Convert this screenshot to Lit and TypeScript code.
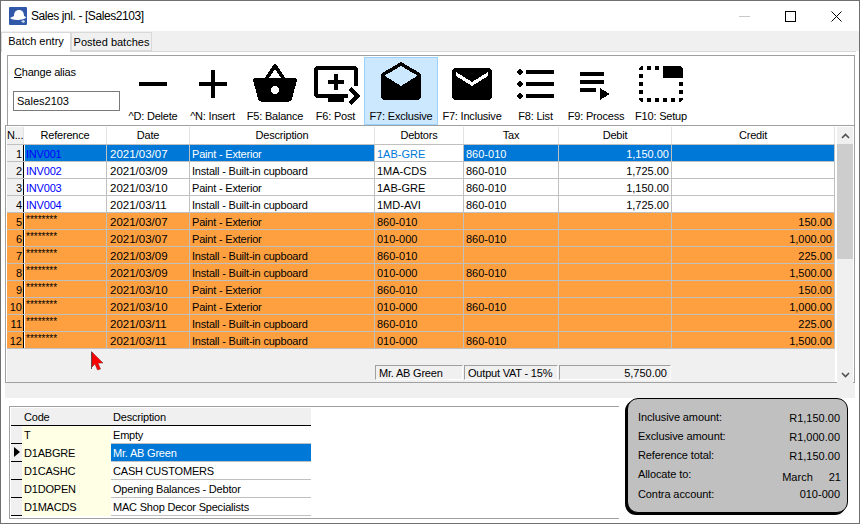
import { LitElement, css, html, svg } from "lit";
import { customElement } from "lit/decorators.js";

// 48px material glyphs used by the toolbar
const ICONS: Record<string, string> = {
  remove: "M19 13H5v-2h14v2z",
  add: "M19 13h-6v6h-2v-6H5v-2h6V5h2v6h6v2z",
  basket:
    "M17.21 9l-4.38-6.56c-.19-.28-.51-.42-.83-.42-.32 0-.64.14-.83.43L6.79 9H2c-.55 0-1 .45-1 1 0 .09.01.18.04.27l2.54 9.27c.23.84 1 1.46 1.92 1.46h13c.92 0 1.69-.62 1.93-1.46l2.54-9.27L23 10c0-.55-.45-1-1-1h-4.79zM9 9l3-4.4L15 9H9zm3 8c-1.1 0-2-.9-2-2s.9-2 2-2 2 .9 2 2-.9 2-2 2z",
  post: "M21 3H3c-1.11 0-2 .89-2 2v12c0 1.1.89 2 2 2h5v2h8v-2h2v-2H3V5h18v8h2V5c0-1.11-.9-2-2-2zm-8 7V7h-2v3H8v2h3v3h2v-3h3v-2h-3zm11 8l-4.5 4.5L18 21l3-3-3-3 1.5-1.5L24 18z",
  drafts:
    "M21.99 8c0-.72-.37-1.35-.94-1.7L12 1 2.95 6.3C2.38 6.65 2 7.28 2 8v10c0 1.1.9 2 2 2h16c1.1 0 2-.9 2-2l-.01-10zM12 13L3.74 7.84 12 3l8.26 4.84L12 13z",
  email:
    "M20 4H4c-1.1 0-1.99.9-1.99 2L2 18c0 1.1.9 2 2 2h16c1.1 0 2-.9 2-2V6c0-1.1-.9-2-2-2zm0 4l-8 5-8-5V6l8 5 8-5v2z",
  list: "M4 10.5c-.83 0-1.5.67-1.5 1.5s.67 1.5 1.5 1.5 1.5-.67 1.5-1.5-.67-1.5-1.5-1.5zm0-6c-.83 0-1.5.67-1.5 1.5S3.17 7.5 4 7.5 5.5 6.83 5.5 6 4.83 4.5 4 4.5zm0 12c-.83 0-1.5.68-1.5 1.5s.68 1.5 1.5 1.5 1.5-.68 1.5-1.5-.67-1.5-1.5-1.5zM7 19h14v-2H7v2zm0-6h14v-2H7v2zm0-8v2h14V5H7z",
  process: "M4 10h12v2H4zm0-4h12v2H4zm0 8h8v2H4zm10 0v6l5-3z",
  setup:
    "M1 9h2V7H1v2zm0 4h2v-2H1v2zm0-8h2V3c-1.1 0-2 .9-2 2zm8 16h2v-2H9v2zm-8-4h2v-2H1v2zm2 4v-2H1c0 1.1.9 2 2 2zM21 3h-8v6h10V5c0-1.1-.9-2-2-2zm0 14h2v-2h-2v2zM9 5h2V3H9v2zM5 21h2v-2H5v2zM5 5h2V3H5v2zm16 16c1.1 0 2-.9 2-2h-2v2zm0-8h2v-2h-2v2zm-8 8h2v-2h-2v2zm4 0h2v-2h-2v2z",
};

const BUTTONS = [
  { icon: "remove", label: "^D: Delete", width: 58 },
  { icon: "add", label: "^N: Insert", width: 61 },
  { icon: "basket", label: "F5: Balance", width: 64 },
  { icon: "post", label: "F6: Post", width: 57 },
  { icon: "drafts", label: "F7: Exclusive", width: 74, active: true },
  { icon: "email", label: "F7: Inclusive", width: 68 },
  { icon: "list", label: "F8: List", width: 59 },
  { icon: "process", label: "F9: Process", width: 62 },
  { icon: "setup", label: "F10: Setup", width: 68 },
];

const HEADERS = ["N...", "Reference", "Date", "Description", "Debtors", "Tax", "Debit", "Credit"];

const PAINT = "Paint - Exterior";
const INSTALL = "Install - Built-in cupboard";
const STARS = "********";

const ROWS = [
  ["INV001", "2021/03/07", PAINT, "1AB-GRE", "860-010", "1,150.00", ""],
  ["INV002", "2021/03/09", INSTALL, "1MA-CDS", "860-010", "1,725.00", ""],
  ["INV003", "2021/03/10", PAINT, "1AB-GRE", "860-010", "1,150.00", ""],
  ["INV004", "2021/03/11", INSTALL, "1MD-AVI", "860-010", "1,725.00", ""],
  [STARS, "2021/03/07", PAINT, "860-010", "", "", "150.00"],
  [STARS, "2021/03/07", PAINT, "010-000", "860-010", "", "1,000.00"],
  [STARS, "2021/03/09", INSTALL, "860-010", "", "", "225.00"],
  [STARS, "2021/03/09", INSTALL, "010-000", "860-010", "", "1,500.00"],
  [STARS, "2021/03/10", PAINT, "860-010", "", "", "150.00"],
  [STARS, "2021/03/10", PAINT, "010-000", "860-010", "", "1,000.00"],
  [STARS, "2021/03/11", INSTALL, "860-010", "", "", "225.00"],
  [STARS, "2021/03/11", INSTALL, "010-000", "860-010", "", "1,500.00"],
];

const CODES = [
  ["T", "Empty"],
  ["D1ABGRE", "Mr. AB Green"],
  ["D1CASHC", "CASH CUSTOMERS"],
  ["D1DOPEN", "Opening Balances - Debtor"],
  ["D1MACDS", "MAC Shop Decor Specialists"],
];

@customElement("app-root")
export class AppRoot extends LitElement {
  static override styles = css`
    :host {
      display: block;
      width: 860px;
      height: 525px;
      position: relative;
      overflow: hidden;
      background: #fff;
      color: #000;
      font-family: "Liberation Sans", Arial, sans-serif;
      font-size: 11px;
      letter-spacing: -0.2px;
    }

    * {
      box-sizing: border-box;
    }

    svg {
      display: block;
    }

    .window {
      width: 860px;
      height: 524px;
      border: 1px solid #707070;
      background: #fff;
    }

    .title {
      height: 30px;
      display: flex;
      align-items: center;
      padding-left: 8px;
      font-size: 12px;
      letter-spacing: -0.42px;
    }

    .title-text {
      margin-left: 4px;
      flex: 1;
    }

    .controls {
      display: flex;
      align-items: center;
      padding-right: 17px;
      gap: 35px;
    }

    .tabs {
      height: 20px;
      background: #f0f0f0;
      display: flex;
      align-items: flex-end;
      padding-top: 1px;
    }

    .tab {
      height: 19px;
      width: 81px;
      border: 1px solid #d9d9d9;
      text-align: center;
      line-height: 18px;
      letter-spacing: 0;
    }

    .tab.on {
      width: 70px;
      height: 20px;
      background: #fff;
      margin-bottom: -1px;
      position: relative;
      border-bottom: 0;
      line-height: 16px;
    }

    .page {
      margin: 0 3px 0 4px;
      border-top: 1px solid #d9d9d9;
      padding-top: 3px;
    }

    .toolbar {
      height: 70px;
      margin: 0 1px 0 2px;
      border-top: 1px solid #a0a0a0;
      border-left: 1px solid #a0a0a0;
      border-right: 1px solid #a0a0a0;
      display: flex;
      padding-top: 1px;
    }

    .alias {
      width: 116px;
      padding: 9px 0 0 6px;
    }

    .alias u {
      text-underline-offset: 1px;
    }

    .alias-input {
      width: 107px;
      height: 20px;
      margin: 13px 0 0 -1px;
      border: 1px solid #7a7a7a;
      padding-left: 3px;
      line-height: 18px;
      letter-spacing: 0;
    }

    .tool {
      height: 68px;
      border: 1px solid transparent;
      display: flex;
      flex-direction: column;
      align-items: center;
      padding-top: 2px;
      white-space: nowrap;
    }

    .tool.on {
      background: #cce8ff;
      border-color: #99d1ff;
    }

    .tool svg {
      width: 48px;
      height: 48px;
      fill: #000;
      flex: none;
      shape-rendering: crispEdges;
    }

    .tool span {
      margin-top: 2px;
    }

    .frame {
      height: 258px;
      border: 1px solid #a0a0a0;
      padding: 1px 1px 0 1px;
      display: flex;
      width: 850px;
    }

    .table {
      width: 828px;
      display: flex;
      flex-direction: column;
    }

    .row {
      display: grid;
      grid-template-columns: 17px 83px 83px 185px 89px 95px 113px 163px;
      grid-template-rows: 16px;
      height: 17px;
      border-bottom: 1px solid #c0c0c0;
      line-height: 18px;
    }

    .row.head {
      height: 18px;
      grid-template-rows: 17px;
      background: #fff;
      line-height: 16px;
    }

    .head div {
      text-align: center;
      border-right: 1px solid #e3e3e3;
    }

    .head div:first-child {
      background: #f0f0f0;
      text-align: left;
      padding-left: 0;
    }

    .cell {
      padding: 0 2px;
      border-right: 1px solid #c0c0c0;
      white-space: nowrap;
      overflow: hidden;
      background: #fff;
    }

    .digits {
      letter-spacing: 0;
    }

    .date {
      padding-left: 3px;
      font-size: 11.5px;
    }

    .num {
      border-right: 1px solid #000;
      background: #f0f0f0;
      text-align: right;
      padding-right: 1px;
      letter-spacing: 0;
    }

    .ref {
      border-left: 1px solid #fff;
      color: #0000ff;
      padding-left: 1px;
    }

    .right {
      text-align: right;
    }

    .row.sel .cell {
      background: #0078d7;
      color: #fff;
    }

    .row.sel .num {
      background: #f0f0f0;
      color: #000;
    }

    .row.sel .ref {
      color: #0000ff;
    }

    .row.sel .debtor {
      background: #fff;
      color: #0078d7;
    }

    .row.posted .cell {
      background: #ffa040;
      color: #000;
    }

    .row.posted .stars {
      font-size: 10px;
      line-height: 13px;
      letter-spacing: 0;
    }

    .totals {
      flex: 1;
      background: #f0f0f0;
      display: grid;
      grid-template-columns: 17px 83px 83px 185px 89px 95px 113px 163px;
      grid-template-rows: 15px;
      padding-top: 16px;
      line-height: 15px;
    }

    .sunk {
      border: 1px solid;
      border-color: #a0a0a0 #fff #fff #a0a0a0;
      margin-right: 1px;
      padding: 0 3px;
      white-space: nowrap;
    }

    .scroll {
      width: 16px;
      margin-left: 2px;
      margin-right: 1px;
      background: #f0f0f0;
      display: flex;
      flex-direction: column;
      align-items: center;
      justify-content: space-between;
      height: 256px;
    }

    .scroll-top {
      width: 16px;
      height: 130px;
    }

    .scroll-btn {
      width: 16px;
      height: 17px;
      display: flex;
      align-items: center;
      justify-content: center;
    }

    .thumb {
      height: 115px;
      background: #cdcdcd;
    }

    .band {
      height: 15px;
      width: 850px;
      background: #f0f0f0;
    }

    .bottom {
      display: flex;
      align-items: flex-start;
      height: 124px;
    }

    .lookup {
      width: 610px;
      height: 113px;
      margin: 8px 0 0 8px;
      border: 1px solid #a0a0a0;
      border-right: 0;
      padding: 1px 0 0 1px;
    }

    .lrow {
      display: grid;
      grid-template-columns: 11px 89px 200px;
      grid-template-rows: 18px;
      width: 300px;
      height: 18px;
      line-height: 18px;
    }

    .lrow > div {
      padding-left: 2px;
      border-bottom: 1px solid #c0c0c0;
      white-space: nowrap;
      overflow: hidden;
    }

    .lrow.top {
      background: #f0f0f0;
    }

    .lrow.top > div {
      border-bottom-color: #000;
    }

    .lrow .mark {
      background: #f0f0f0;
      border-bottom-color: #000;
      padding: 3px 0 0 3px;
    }

    .lrow .code {
      background: #ffffe6;
      border-bottom-color: #ffffe6;
    }

    .lrow.sel .desc {
      background: #0078d7;
      color: #fff;
    }

    .summary {
      width: 221px;
      height: 115px;
      margin-left: 8px;
      background: #c0c0c0;
      border: 1px solid #000;
      border-radius: 11px;
      box-shadow: -2px 2px 0 #000;
      padding: 11px 7px 0 10px;
      display: flex;
      flex-direction: column;
    }

    .sum-row {
      height: 19px;
      display: flex;
      justify-content: space-between;
      line-height: 14px;
      letter-spacing: -0.1px;
    }

    .sum-row .val {
      padding-top: 1px;
      letter-spacing: 0;
    }

    .sum-row .month {
      padding-top: 3px;
      margin-right: -1px;
      display: flex;
      gap: 16px;
      letter-spacing: 0;
    }

    .sum-row.last {
      margin-top: 1px;
    }

    .sum-row.last .val {
      padding-top: 0;
    }

    .pointer {
      position: absolute;
      left: 90px;
      top: 351px;
    }
  `;

  private renderRow(row: string[], i: number) {
    const posted = i >= 4;
    const kind = i === 0 ? "row sel" : posted ? "row posted" : "row";
    return html`
      <div class=${kind}>
        <div class="cell num">${i + 1}</div>
        <div class="cell ref ${posted ? "stars" : ""}">${row[0]}</div>
        <div class="cell digits date">${row[1]}</div>
        <div class="cell">${row[2]}</div>
        <div class="cell digits debtor">${row[3]}</div>
        <div class="cell digits">${row[4]}</div>
        <div class="cell digits right">${row[5]}</div>
        <div class="cell digits right">${row[6]}</div>
      </div>
    `;
  }

  override render() {
    return html`
      <div class="window">
        <div class="title">
          <svg width="18" height="18" viewBox="0 0 18 18">
            <rect width="18" height="18" rx="1" fill="#3158a8"></rect>
            <path d="M5 9c0-4 2-6 5-6s5 2 5 6l2 1c0 2-5 3-9 3-3 0-6-1-7-2 1-1 3-1 4-2z" fill="#fff"></path>
            <path d="M12 14l3-1 1 2-2 1z" fill="#cfd8ee"></path>
          </svg>
          <span class="title-text">Sales jnl. - [Sales2103]</span>
          <div class="controls">
            <svg width="11" height="11" viewBox="0 0 11 11">
              <path d="M0 5.5h11" stroke="#c8c8c8" fill="none"></path>
            </svg>
            <svg width="11" height="11" viewBox="0 0 11 11">
              <rect x="0.5" y="0.5" width="10" height="10" stroke="#000" fill="none"></rect>
            </svg>
            <svg width="11" height="11" viewBox="0 0 11 11">
              <path d="M.5.5l10 10M10.5.5l-10 10" stroke="#000" fill="none"></path>
            </svg>
          </div>
        </div>
        <div class="tabs">
          <div class="tab on">Batch entry</div>
          <div class="tab">Posted batches</div>
        </div>
        <div class="page">
          <div class="toolbar">
            <div class="alias">
              <div><u>C</u>hange alias</div>
              <div class="alias-input">Sales2103</div>
            </div>
            ${BUTTONS.map(
              (b) => html`
                <div class="tool ${b.active ? "on" : ""}" style="width:${b.width}px">
                  <svg viewBox="0 0 24 24">${svg`<path d=${ICONS[b.icon]}></path>`}</svg>
                  <span>${b.label}</span>
                </div>
              `
            )}
          </div>
          <div class="frame">
            <div class="table">
              <div class="row head">${HEADERS.map((h) => html`<div>${h}</div>`)}</div>
              ${ROWS.map((r, i) => this.renderRow(r, i))}
              <div class="totals">
                <div></div><div></div><div></div><div></div>
                <div class="sunk">Mr. AB Green</div>
                <div class="sunk">Output VAT - 15%</div>
                <div class="sunk right digits">5,750.00</div>
              </div>
            </div>
            <div class="scroll">
              <div class="scroll-top">
                <div class="scroll-btn">
                  <svg width="9" height="6" viewBox="0 0 9 6">
                    <path d="M1 5l3.5-3.5L8 5" stroke="#505050" stroke-width="1.6" fill="none"></path>
                  </svg>
                </div>
                <div class="thumb"></div>
              </div>
              <div class="scroll-btn">
                <svg width="9" height="6" viewBox="0 0 9 6">
                  <path d="M1 1l3.5 3.5L8 1" stroke="#505050" stroke-width="1.6" fill="none"></path>
                </svg>
              </div>
            </div>
          </div>
          <div class="band"></div>
        </div>
        <div class="bottom">
          <div class="lookup">
            <div class="lrow top">
              <div></div>
              <div>Code</div>
              <div>Description</div>
            </div>
            ${CODES.map(
              (c, i) => html`
                <div class="lrow ${i === 1 ? "sel" : ""}">
                  <div class="mark">
                    ${i === 1
                      ? html`<svg width="6" height="10" viewBox="0 0 6 10"><path d="M0 0l6 5-6 5z"></path></svg>`
                      : ""}
                  </div>
                  <div class="code">${c[0]}</div>
                  <div class="desc">${c[1]}</div>
                </div>
              `
            )}
          </div>
          <div class="summary">
            <div class="sum-row"><span>Inclusive amount:</span><span class="val">R1,150.00</span></div>
            <div class="sum-row"><span>Exclusive amount:</span><span class="val">R1,000.00</span></div>
            <div class="sum-row"><span>Reference total:</span><span class="val">R1,150.00</span></div>
            <div class="sum-row">
              <span>Allocate to:</span>
              <span class="month"><span>March</span><span>21</span></span>
            </div>
            <div class="sum-row last"><span>Contra account:</span><span class="val">010-000</span></div>
          </div>
        </div>
      </div>
      <svg class="pointer" width="14" height="21" viewBox="0 0 14 21">
        <path d="M1 0v18h1V1z" fill="#555"></path>
        <path d="M2 1l11 11-5 0 2.500 6-3 1-2.500-6-3 3z" fill="#f00" stroke="#7a2020" stroke-width="0.5"></path>
      </svg>
    `;
  }
}

declare global {
  interface HTMLElementTagNameMap {
    "app-root": AppRoot;
  }
}
